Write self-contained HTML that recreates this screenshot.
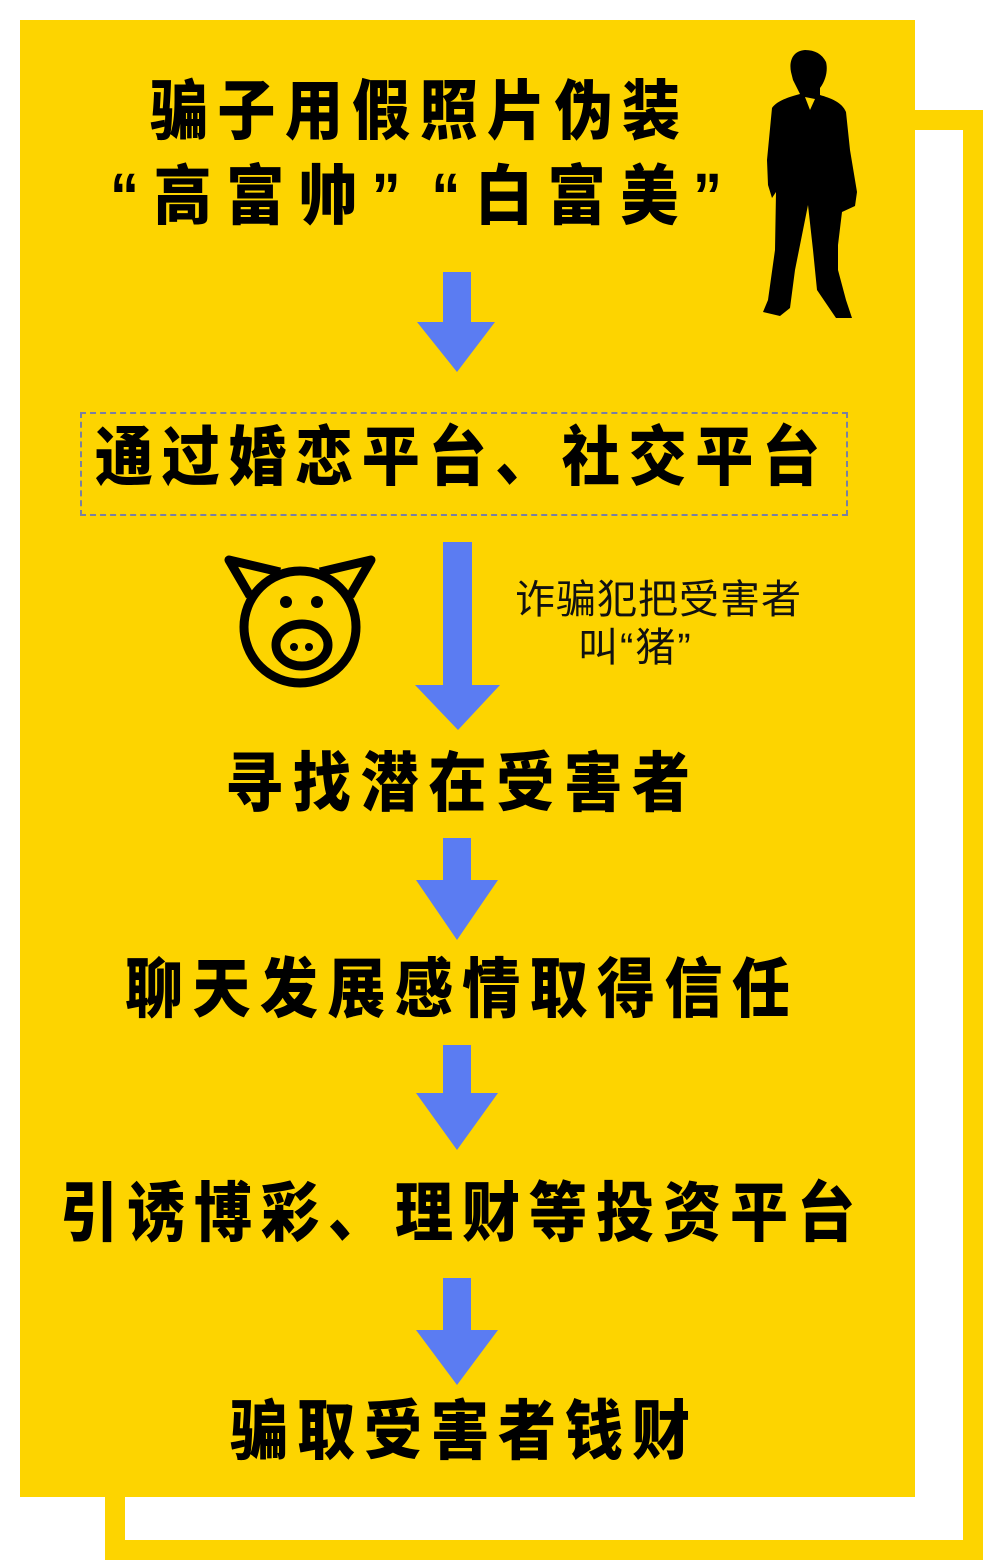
<!DOCTYPE html>
<html><head><meta charset="utf-8"><style>
html,body{margin:0;padding:0;background:#fff;}
body{width:1000px;height:1565px;position:relative;overflow:hidden;}
.main{position:absolute;left:20px;top:20px;width:895px;height:1477px;background:#fdd400;}
.outline{position:absolute;left:105px;top:110px;width:838px;height:1410px;border:20px solid #fdd400;}
.t{position:absolute;font-family:"Liberation Sans","Noto Sans CJK SC",sans-serif;font-weight:900;color:#000;text-align:justify;text-align-last:justify;white-space:nowrap;font-size:58px;line-height:60px;transform:scaleY(1.12);}
.s{position:absolute;font-family:"Liberation Sans","Noto Sans CJK SC",sans-serif;color:#111;font-size:40px;line-height:44px;white-space:nowrap;}
.box{position:absolute;left:80px;top:412px;width:764px;height:100px;border:2px dashed #7a80a0;}
svg{position:absolute;left:0;top:0;}
</style></head><body>
<div class="outline"></div>
<div class="main"></div>
<div class="box"></div>
<svg width="1000" height="1565">
<g fill="#5b7cf2">
<polygon points="443,272 471,272 471,322 495,322 457,372 417,322 443,322"/>
<polygon points="443,542 472,542 472,685 500,685 458,730 415,685 443,685"/>
<polygon points="443,838 471,838 471,880 498,880 457,940 416,880 443,880"/>
<polygon points="443,1045 471,1045 471,1093 498,1093 457,1150 416,1093 443,1093"/>
<polygon points="443,1278 471,1278 471,1330 498,1330 457,1385 416,1330 443,1330"/>
</g>
<g fill="none" stroke="#000" stroke-width="9" stroke-linejoin="round">
<circle cx="300" cy="627" r="56"/>
<path d="M250,596 L229,560 L280,572"/>
<path d="M350,596 L371,560 L320,572"/>
<ellipse cx="302" cy="645" rx="26" ry="21"/>
</g>
<g fill="#000">
<circle cx="286" cy="602" r="6"/><circle cx="317" cy="602" r="6"/>
<circle cx="294" cy="647" r="4"/><circle cx="309" cy="647" r="4"/>
<path d="M805,50 C792,51 789,62 791,72 L793,80 L798,90 L800,94 C785,98 776,102 772,108 L767,160 L768,185 L772,198 L776,192 L775,250 L768,300 L763,312 L780,316 L790,308 L795,270 L808,205 L813,250 L817,290 L836,318 L852,318 L846,300 L838,270 L838,245 L842,212 L855,206 L857,192 L850,150 L846,112 C842,102 830,98 820,95 L820,88 C826,80 828,70 826,62 C822,54 815,50 805,50 Z"/>
</g>
<path d="M805,97 L815,99 L810,110 Z" fill="#fdd400"/>
</svg>
<div class="t" style="left:150px;top:82px;width:530px;">骗子用假照片伪装</div>
<div class="t" style="left:110px;top:167px;width:612px;">“高富帅” “白富美”</div>
<div class="t" style="left:95px;top:428px;width:725px;">通过婚恋平台、社交平台</div>
<div class="s" style="left:515px;top:578px;letter-spacing:1px;">诈骗犯把受害者</div>
<div class="s" style="left:578px;top:626px;letter-spacing:2px;">叫“猪”</div>
<div class="t" style="left:225px;top:754px;width:465px;">寻找潜在受害者</div>
<div class="t" style="left:125px;top:960px;width:665px;">聊天发展感情取得信任</div>
<div class="t" style="left:60px;top:1184px;width:795px;">引诱博彩、理财等投资平台</div>
<div class="t" style="left:230px;top:1402px;width:460px;">骗取受害者钱财</div>
</body></html>
